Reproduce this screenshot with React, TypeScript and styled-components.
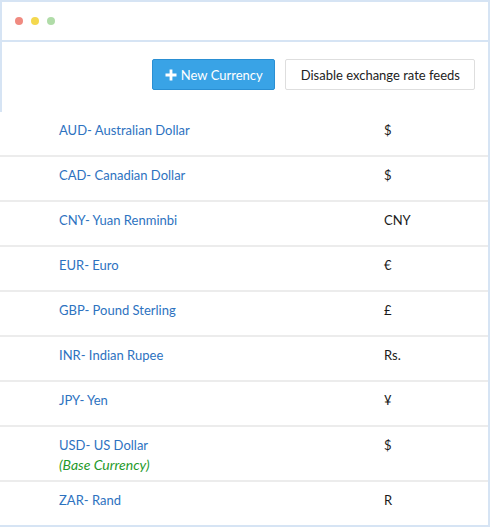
import styled, { createGlobalStyle } from 'styled-components';

const GlobalStyle = createGlobalStyle`
  html, body {
    margin: 0;
    padding: 0;
    background: #ffffff;
  }
  body {
    font-family: Lato, "Open Sans", Arial, sans-serif;
    -webkit-font-smoothing: antialiased;
  }
`;

const frame = '#d6e4f4';

const Window = styled.div`
  width: 490px;
  height: 527px;
  box-sizing: border-box;
  border-top: 2px solid ${frame};
  border-right: 2px solid ${frame};
  border-bottom: 2px solid ${frame};
  background: #fff;
  display: flex;
  flex-direction: column;
  overflow: hidden;
`;

const TitleBar = styled.div`
  height: 38px;
  flex: none;
  display: flex;
  align-items: center;
  gap: 8px;
  padding-left: 13px;
  border-left: 2px solid ${frame};
  border-bottom: 2px solid ${frame};
`;

const Dot = styled.span<{ color: string }>`
  width: 8px;
  height: 8px;
  border-radius: 50%;
  background: ${p => p.color};
`;

const Toolbar = styled.div`
  height: 70px;
  flex: none;
  box-sizing: border-box;
  display: flex;
  justify-content: flex-end;
  align-items: flex-start;
  gap: 10px;
  padding: 17px 13px 0 0;
  border-left: 2px solid ${frame};
`;

const Button = styled.button<{ primary?: boolean }>`
  height: 31px;
  box-sizing: border-box;
  display: inline-flex;
  align-items: center;
  gap: 4px;
  padding: ${p => (p.primary ? '0 11px 0 12px' : '0 14px 0 15px')};
  font-family: inherit;
  font-size: 13px;
  border-radius: 2px;
  cursor: pointer;
  border: 1px solid ${p => (p.primary ? '#2a8fd3' : '#dedede')};
  background: ${p => (p.primary ? '#39a3e6' : '#ffffff')};
  color: ${p => (p.primary ? '#ffffff' : '#222222')};
`;

const List = styled.div`
  display: flex;
  flex-direction: column;
`;

const Row = styled.div<{ tall?: boolean }>`
  display: grid;
  grid-template-columns: 325px 1fr;
  align-items: start;
  flex: none;
  height: ${p => (p.tall ? 55 : 45)}px;
  padding: 10px 0 0 59px;
  box-sizing: border-box;
  border-bottom: 2px solid #ececec;
  font-size: 13px;
  line-height: 16px;
  &:last-child {
    border-bottom: none;
  }
`;

const NameCell = styled.div`
  display: flex;
  flex-direction: column;
  gap: 4px;
`;

const Name = styled.span`
  color: #2d72bf;
`;

const BaseNote = styled.span`
  color: #1f9a2a;
  font-style: italic;
  font-size: 14px;
`;

const Symbol = styled.span`
  color: #1a1a1a;
`;

const PlusIcon = () => (
  <svg width="12" height="12" viewBox="0 0 12 12">
    <path d="M6 0.5v11M0.5 6h11" stroke="#fff" strokeWidth="2.8" />
  </svg>
);

const currencies = [
  { name: 'AUD- Australian Dollar', symbol: '$' },
  { name: 'CAD- Canadian Dollar', symbol: '$' },
  { name: 'CNY- Yuan Renminbi', symbol: 'CNY' },
  { name: 'EUR- Euro', symbol: '€' },
  { name: 'GBP- Pound Sterling', symbol: '£' },
  { name: 'INR- Indian Rupee', symbol: 'Rs.' },
  { name: 'JPY- Yen', symbol: '¥' },
  { name: 'USD- US Dollar', symbol: '$', base: true },
  { name: 'ZAR- Rand', symbol: 'R' },
];

export default function App() {
  return (
    <>
      <GlobalStyle />
      <Window>
        <TitleBar>
          <Dot color="#f08a80" />
          <Dot color="#f4d84e" />
          <Dot color="#b0dca8" />
        </TitleBar>
        <Toolbar>
          <Button primary>
            <PlusIcon />
            New Currency
          </Button>
          <Button>Disable exchange rate feeds</Button>
        </Toolbar>
        <List>
          {currencies.map(c => (
            <Row key={c.name} tall={c.base}>
              <NameCell>
                <Name>{c.name}</Name>
                {c.base && <BaseNote>(Base Currency)</BaseNote>}
              </NameCell>
              <Symbol>{c.symbol}</Symbol>
            </Row>
          ))}
        </List>
      </Window>
    </>
  );
}
